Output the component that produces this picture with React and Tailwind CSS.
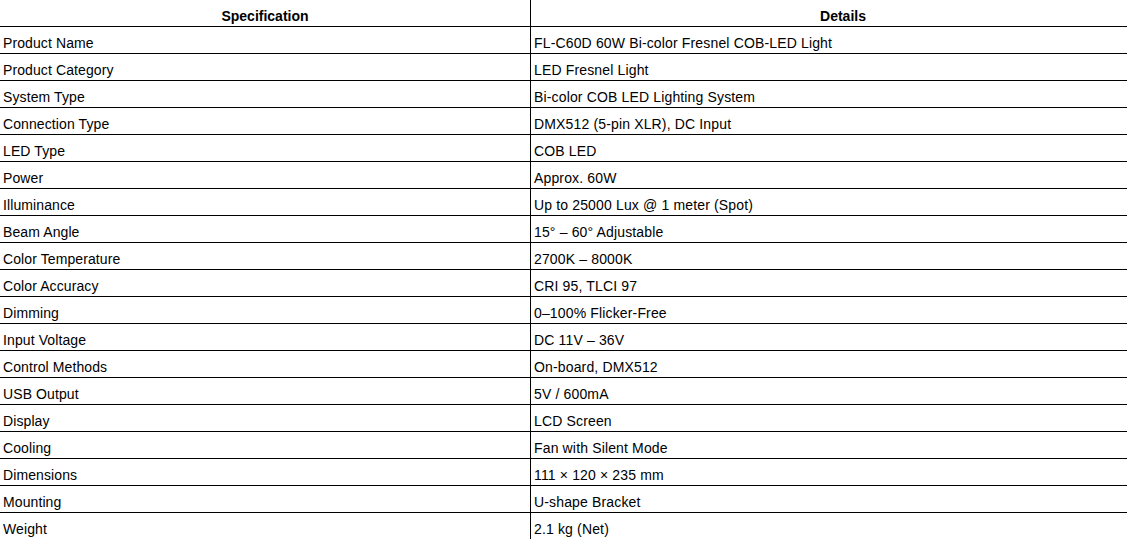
import React from "react";

const rows = [
  ["Product Name", "FL-C60D 60W Bi-color Fresnel COB-LED Light"],
  ["Product Category", "LED Fresnel Light"],
  ["System Type", "Bi-color COB LED Lighting System"],
  ["Connection Type", "DMX512 (5-pin XLR), DC Input"],
  ["LED Type", "COB LED"],
  ["Power", "Approx. 60W"],
  ["Illuminance", "Up to 25000 Lux @ 1 meter (Spot)"],
  ["Beam Angle", "15° – 60° Adjustable"],
  ["Color Temperature", "2700K – 8000K"],
  ["Color Accuracy", "CRI 95, TLCI 97"],
  ["Dimming", "0–100% Flicker-Free"],
  ["Input Voltage", "DC 11V – 36V"],
  ["Control Methods", "On-board, DMX512"],
  ["USB Output", "5V / 600mA"],
  ["Display", "LCD Screen"],
  ["Cooling", "Fan with Silent Mode"],
  ["Dimensions", "111 × 120 × 235 mm"],
  ["Mounting", "U-shape Bracket"],
  ["Weight", "2.1 kg (Net)"],
];

export default function App() {
  return (
    <div className="w-[1127px] h-[539px] overflow-hidden bg-white text-black font-['Liberation_Sans',Arial,sans-serif] text-[14px] leading-[20px]">
      <div className="grid grid-cols-[531px_624px] w-[1155px]">
        <div className="h-[27px] pt-[6px] border-b border-r border-black text-center font-bold">Specification</div>
        <div className="h-[27px] pt-[6px] border-b border-black text-center font-bold">Details</div>
        {rows.map(([k, v]) => (
          <React.Fragment key={k}>
            <div className="h-[27px] pt-[6px] pl-[3px] border-b border-r border-black tracking-[0.1px]">{k}</div>
            <div className="h-[27px] pt-[6px] pl-[3px] border-b border-black tracking-[0.15px]">{v}</div>
          </React.Fragment>
        ))}
      </div>
    </div>
  );
}
